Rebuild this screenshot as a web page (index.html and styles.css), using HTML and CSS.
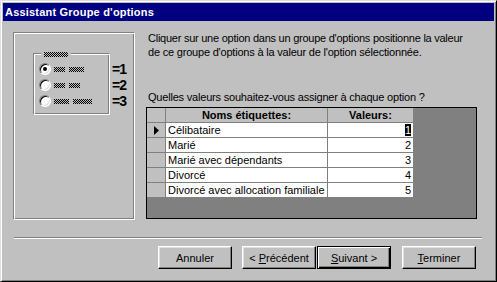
FILE: index.html
```html
<!DOCTYPE html>
<html lang="fr">
<head>
    <meta charset="UTF-8">
    <title>Assistant Groupe d'options</title>
    <link rel="stylesheet" href="styles.css">
</head>
<body>
    <!-- motif tramé pour le faux texte de l'apercu -->
    <svg class="defs" width="0" height="0">
        <defs>
            <pattern id="dots" width="2" height="2" patternUnits="userSpaceOnUse">
                <rect width="1" height="1" fill="#000"/>
                <rect x="1" y="1" width="1" height="1" fill="#000"/>
            </pattern>
        </defs>
    </svg>

    <div class="window">
        <div class="titlebar">Assistant Groupe d'options</div>

        <div class="client">
            <div class="top">
                <!-- apercu du groupe d'options -->
                <div class="preview">
                    <div class="optgroup">
                        <span class="legend"><svg class="hatch" width="24" height="5"><rect width="24" height="5" fill="url(#dots)"/></svg></span>
                        <div class="opt">
                            <span class="radio checked"></span>
                            <svg class="hatch" width="11" height="5"><rect width="11" height="5" fill="url(#dots)"/></svg>
                            <svg class="hatch" width="15" height="5"><rect width="15" height="5" fill="url(#dots)"/></svg>
                        </div>
                        <div class="opt">
                            <span class="radio"></span>
                            <svg class="hatch" width="11" height="5"><rect width="11" height="5" fill="url(#dots)"/></svg>
                            <svg class="hatch" width="11" height="5"><rect width="11" height="5" fill="url(#dots)"/></svg>
                        </div>
                        <div class="opt">
                            <span class="radio"></span>
                            <svg class="hatch" width="15" height="5"><rect width="15" height="5" fill="url(#dots)"/></svg>
                            <svg class="hatch" width="19" height="5"><rect width="19" height="5" fill="url(#dots)"/></svg>
                        </div>
                    </div>
                    <div class="eqs">
                        <div>=1</div>
                        <div>=2</div>
                        <div>=3</div>
                    </div>
                </div>

                <div class="main">
                    <p class="intro"><span class="l1">Cliquer sur une option dans un groupe d'options positionne la valeur</span><br><span class="l2">de ce groupe d'options à la valeur de l'option sélectionnée.</span></p>
                    <p class="question">Quelles valeurs souhaitez-vous assigner à chaque option ?</p>

                    <div class="datasheet">
                        <table>
                            <tr class="head">
                                <td class="sel"></td>
                                <td class="name">Noms étiquettes:</td>
                                <td class="val">Valeurs:</td>
                            </tr>
                            <tr>
                                <td class="sel"><svg width="5" height="9" viewBox="0 0 5 9"><polygon points="0,0 5,4.5 0,9" fill="#000"/></svg></td>
                                <td class="name">Célibataire</td>
                                <td class="val"><span class="hl">1</span></td>
                            </tr>
                            <tr>
                                <td class="sel"></td>
                                <td class="name">Marié</td>
                                <td class="val">2</td>
                            </tr>
                            <tr>
                                <td class="sel"></td>
                                <td class="name">Marié avec dépendants</td>
                                <td class="val">3</td>
                            </tr>
                            <tr>
                                <td class="sel"></td>
                                <td class="name">Divorcé</td>
                                <td class="val">4</td>
                            </tr>
                            <tr>
                                <td class="sel"></td>
                                <td class="name">Divorcé avec allocation familiale</td>
                                <td class="val">5</td>
                            </tr>
                        </table>
                    </div>
                </div>
            </div>

            <div class="separator"></div>

            <div class="buttons">
                <button class="btn">Annuler</button>
                <button class="btn prev">&lt; <u>P</u>récédent</button>
                <button class="btn default"><u>S</u>uivant &gt;</button>
                <button class="btn finish"><u>T</u>erminer</button>
            </div>
        </div>
    </div>
</body>
</html>
```

FILE: styles.css
```css
html, body {
    margin: 0;
    padding: 0;
    background: #c0c0c0;
}

body {
    font-family: 'Liberation Sans', Arial, sans-serif;
    font-size: 11px;
    color: #000;
}

.defs {
    position: absolute;
    width: 0;
    height: 0;
}

.window {
    box-sizing: border-box;
    width: 497px;
    height: 282px;
    padding: 2px;
    background: #c0c0c0;
    border: 1px solid;
    border-color: #dfdfdf #000 #000 #dfdfdf;
    box-shadow: inset 1px 1px #fff, inset -1px -1px #808080;
}

.titlebar {
    height: 18px;
    line-height: 18px;
    padding-left: 2px;
    background: #000080;
    color: #fff;
    font-weight: bold;
    font-size: 11px;
    letter-spacing: 0.2px;
}

.client {
    padding: 10px 0 0 10px;
}

.top {
    display: flex;
    align-items: flex-start;
}

/* bordure gravee (etched) */
.preview,
.optgroup {
    box-sizing: border-box;
    border: 1px solid;
    border-color: #808080 #fff #fff #808080;
    box-shadow: inset 1px 1px #fff, inset -1px -1px #808080;
}

.preview {
    display: flex;
    align-items: flex-start;
    width: 122px;
    height: 188px;
    margin-top: 1px;
    padding: 20px 0 0 19px;
}

.optgroup {
    position: relative;
    width: 77px;
    height: 62px;
    padding: 7px 0 0 5px;
}

.legend {
    position: absolute;
    top: -4px;
    left: 7px;
    height: 8px;
    padding: 0 3px;
    background: #c0c0c0;
    display: flex;
    align-items: center;
}

.opt {
    display: flex;
    align-items: center;
    height: 16px;
}

.hatch {
    display: block;
    shape-rendering: crispEdges;
}

.opt .hatch {
    margin-left: 4px;
}

.opt .radio + .hatch {
    margin-left: 3px;
}

.radio {
    position: relative;
    box-sizing: border-box;
    width: 12px;
    height: 12px;
    border-radius: 50%;
    background: #fff;
    border: 1px solid;
    border-color: #808080 #fff #fff #808080;
    box-shadow: inset 1px 1px #000, inset -1px -1px #dfdfdf;
}

.radio.checked::after {
    content: "";
    position: absolute;
    left: 3px;
    top: 3px;
    width: 4px;
    height: 4px;
    border-radius: 50%;
    background: #000;
}

.eqs {
    margin: 8px 0 0 2px;
    font-size: 14px;
    font-weight: bold;
    line-height: 16px;
    letter-spacing: -1px;
}

.main {
    margin-left: 11px;
    width: 331px;
}

.intro,
.question {
    margin: 0;
    padding-left: 2px;
    line-height: 14px;
    white-space: nowrap;
}

.intro .l1 {
    letter-spacing: -0.25px;
}

.intro .l2 {
    letter-spacing: -0.2px;
}

.question {
    margin-top: 31px;
    letter-spacing: -0.2px;
}

.datasheet {
    box-sizing: border-box;
    height: 112px;
    margin-top: 3px;
    background: #808080;
    border: 1px solid #000;
}

.datasheet table {
    border-collapse: separate;
    border-spacing: 0;
}

.datasheet td {
    height: 14px;
    padding: 0;
    line-height: 14px;
    background: #fff;
    border-right: 1px solid #808080;
    border-bottom: 1px solid #808080;
    white-space: nowrap;
}

.datasheet td.sel {
    width: 18px;
    background: #c0c0c0;
    text-align: center;
    vertical-align: middle;
}

.datasheet td.sel svg {
    display: block;
    margin: 0 auto;
}

.datasheet td.name {
    width: 159px;
    padding-left: 2px;
}

.datasheet td.val {
    width: 83px;
    padding-right: 2px;
    text-align: right;
}

.datasheet .head td {
    background: #c0c0c0;
    font-weight: bold;
    text-align: center;
}

.datasheet .head td.name {
    padding-left: 0;
    width: 161px;
}

.datasheet .head td.val {
    padding-right: 0;
    width: 85px;
}

.hl {
    background: #000;
    color: #fff;
}

.separator {
    width: 468px;
    margin: 17px 0 0 1px;
    border-top: 1px solid #808080;
    border-bottom: 1px solid #fff;
}

.buttons {
    display: flex;
    margin-top: 7px;
    padding-left: 145px;
}

.btn {
    box-sizing: border-box;
    width: 74px;
    height: 23px;
    padding: 0;
    font-family: 'Liberation Sans', Arial, sans-serif;
    font-size: 11px;
    color: #000;
    background: #c0c0c0;
    border: 1px solid;
    border-color: #fff #000 #000 #fff;
    box-shadow: inset -1px -1px #808080, inset 1px 1px #dfdfdf;
}

.btn.prev {
    margin-left: 10px;
}

.btn.default {
    margin-left: 1px;
    border-color: #000;
    box-shadow: inset 1px 1px #fff, inset -1px -1px #000, inset -2px -2px #808080;
}

.btn.finish {
    margin-left: 11px;
}
```
